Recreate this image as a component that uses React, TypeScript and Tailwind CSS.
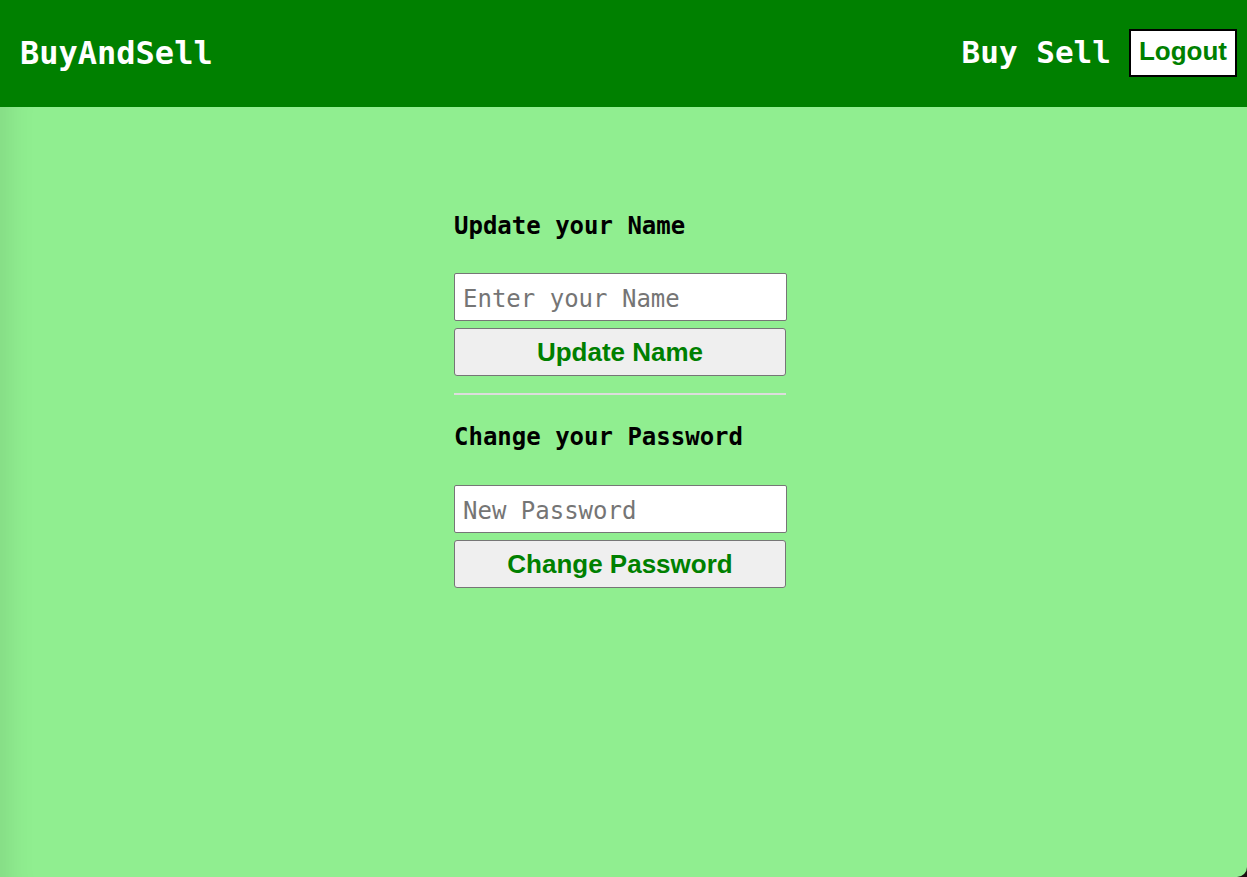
import React, { useState } from "react";

const mono = "font-['DejaVu_Sans_Mono',monospace]";
const arial = "font-['Liberation_Sans',Arial,sans-serif]";

const App = () => {
  const [name, setName] = useState("");
  const [password, setPassword] = useState("");

  return (
    <div className="min-h-screen flex flex-col bg-[#1a1010]">
      {/* Navbar */}
      <header className="h-[107px] bg-[#008000] flex items-center justify-between pl-5 pr-[10px] pb-[2px]">
        <h1 className={`${mono} text-[32px] font-bold text-white`}>BuyAndSell</h1>
        <nav className="flex items-center gap-[18px]">
          <span className={`${mono} text-[31px] font-bold text-white`}>Buy Sell</span>
          <button
            className={`${arial} text-[26px] font-bold text-[#008000] bg-white border-2 border-black h-12 px-[8px] pb-[3px] leading-none`}
          >
            Logout
          </button>
        </nav>
      </header>

      {/* Profile */}
      <main className="flex-1 bg-[#90ee90] rounded-br-[10px] shadow-[inset_36px_0_30px_-30px_rgba(0,0,0,0.1)] flex justify-center pt-[105px] pr-[6px]">
        <div className="w-[333px] flex flex-col">
          <h2 className={`${mono} text-2xl font-bold text-black leading-[28px]`}>Update your Name</h2>
          <input
            value={name}
            onChange={(e) => setName(e.target.value)}
            placeholder="Enter your Name"
            className={`${mono} mt-[33px] h-12 bg-white border border-[#767676] rounded-[2px] px-2 pt-[3px] text-2xl placeholder:text-[#757575] outline-none`}
          />
          <button
            className={`${arial} mt-[7px] h-12 w-[332px] bg-[#efefef] border border-[#767676] rounded-[3px] text-[26px] font-bold text-[#008000]`}
          >
            Update Name
          </button>
          <hr className="mt-[17px] w-[332px] border-0 border-t-2 border-[#dddddd]" />

          <h2 className={`${mono} mt-[28px] text-2xl font-bold text-black leading-[28px]`}>Change your Password</h2>
          <input
            type="password"
            value={password}
            onChange={(e) => setPassword(e.target.value)}
            placeholder="New Password"
            className={`${mono} mt-[34px] h-12 bg-white border border-[#767676] rounded-[2px] px-2 pt-[3px] text-2xl placeholder:text-[#757575] outline-none`}
          />
          <button
            className={`${arial} mt-[7px] h-12 w-[332px] bg-[#efefef] border border-[#767676] rounded-[3px] text-[26px] font-bold text-[#008000]`}
          >
            Change Password
          </button>
        </div>
      </main>
    </div>
  );
};

export default App;
